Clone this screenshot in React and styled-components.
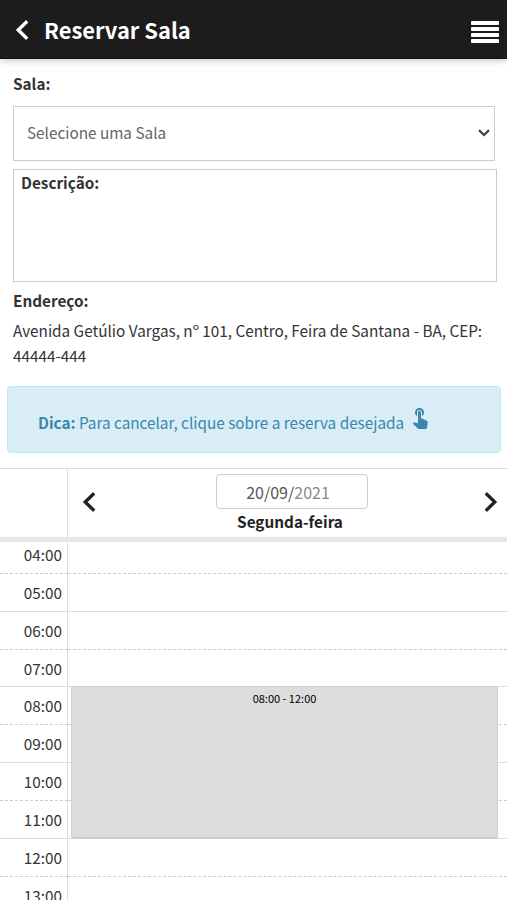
import React, { Component } from 'react';
import styled, { createGlobalStyle, css } from 'styled-components';
import { MdTouchApp } from 'react-icons/md';

const Global = {
    color: {
        body: '#333',
        bar: '#1c1c1c',
        line: '#ddd',
        info: '#3a87ad',
    },
    size: {
        body: '15.3px',
        label: '15.3px',
    },
    font: '"Noto Sans CJK SC", "Noto Sans CJK JP", "Noto Sans", sans-serif',
};

const ROW_HEIGHT = 37.87;

const GlobalStyle = createGlobalStyle`
    * {
        box-sizing: border-box;
    }
    body {
        margin: 0;
        background: #fff;
        color: ${Global.color.body};
        font-family: ${Global.font};
        font-size: ${Global.size.body};
        line-height: 25px;
    }
    button, input, select {
        font-family: inherit;
    }
`;

const Page = styled.div`
    display: flex;
    flex-direction: column;
    height: 900px;
    overflow: hidden;
`;

const Header = styled.header`
    display: flex;
    align-items: center;
    flex: 0 0 59px;
    height: 59px;
    padding: 3px 8px 0 15px;
    background: ${Global.color.bar};
    border-bottom: 1px solid #111;
    box-shadow: 0 1px 8px rgba(0, 0, 0, 0.25);
`;

const Title = styled.h1`
    flex: 1;
    margin: -2px 0 0 15px;
    color: #fff;
    font-size: 21.9px;
    font-weight: 700;
    line-height: 30px;
`;

const IconButton = styled.button`
    display: flex;
    align-items: center;
    padding: 0;
    border: 0;
    background: none;
    color: ${props => props.$color || '#222'};
`;

const BackButton = styled(IconButton)`
    margin-top: -2px;
`;

const MenuButton = styled(IconButton)`
    margin-top: 2px;
`;

const Form = styled.section`
    display: flex;
    flex-direction: column;
    padding: 12px 10px 0 13px;
`;

const Label = styled.div`
    font-size: ${Global.size.label};
    font-weight: 700;
    line-height: 24px;
`;

const Select = styled.div`
    display: flex;
    align-items: center;
    justify-content: space-between;
    width: 482px;
    height: 55px;
    margin: 11px 0 8px;
    padding: 0 4px 2px 13px;
    border: 1px solid #ccc;
    color: #666;
`;

const Description = styled.div`
    height: 113px;
    padding: 0 7px;
    border: 1px solid #ccc;
    margin-bottom: 6px;
`;

const Address = styled.p`
    margin: 6px 0 0;
    line-height: 25px;
`;

const Tip = styled.div`
    display: flex;
    align-items: center;
    flex: 0 0 67px;
    margin: 18px 6px 15px 7px;
    padding: 6px 30px 0;
    border: 1px solid #bce8f1;
    border-radius: 4px;
    background: #d9edf7;
    color: ${Global.color.info};
    white-space: pre;

    svg {
        margin: 0 0 12px 4px;
    }
`;

const DayHeader = styled.div`
    display: grid;
    grid-template-columns: 68px 1fr;
    flex: 0 0 74px;
    border-top: 1px solid ${Global.color.line};
    border-bottom: 5px solid #e7e7e7;
`;

const Corner = styled.div`
    border-right: 1px solid ${Global.color.line};
`;

const DayNav = styled.div`
    display: flex;
    justify-content: space-between;
    padding: 0 9px 2px 14px;
`;

const Day = styled.div`
    display: flex;
    flex-direction: column;
    align-items: center;
    padding: 5px 0 0 3px;
`;

const DateField = styled.div`
    width: 152px;
    height: 35px;
    border: 1px solid #ccc;
    border-radius: 4px;
    color: #555;
    font-size: 16px;
    line-height: 34px;
    padding-right: 7px;
    text-align: center;

    span {
        color: #888;
    }
`;

const DayName = styled(Label)`
    margin-right: 3px;
    color: #222;
`;

const Schedule = styled.div`
    flex: 1;
    overflow: hidden;
`;

const Grid = styled.div`
    display: grid;
    grid-template-columns: 68px 1fr;
    grid-auto-rows: ${ROW_HEIGHT}px;
    margin-top: -6px;
`;

const Hour = styled.div`
    grid-column: 1;
    grid-row: ${props => props.$row};
    padding-right: 5px;
    border-right: 1px solid ${Global.color.line};
    border-bottom: 1px solid ${Global.color.line};
    line-height: 36px;
    text-align: right;

    ${props => props.$dashed && css`
        border-bottom: 1px dashed #ccc;
    `}
`;

const Slot = styled(Hour)`
    grid-column: 2;
    border-right: 0;
`;

const Booking = styled.div`
    grid-column: 2;
    grid-row: ${props => props.$from} / span ${props => props.$hours};
    z-index: 1;
    margin: -1px 9px 0 3px;
    padding-top: 3px;
    border: 1px solid #d0d0d0;
    border-bottom: 2px solid #ccc;
    border-radius: 3px;
    background: #ddd;
    color: #000;
    font-size: 11px;
    line-height: 17px;
    text-align: center;
`;

const HOURS = ['04:00', '05:00', '06:00', '07:00', '08:00', '09:00', '10:00', '11:00', '12:00', '13:00'];

const Chevron = ({ right }) => (
    <svg width="14" height="20" viewBox="0 0 14 20" fill="none" stroke="currentColor" strokeWidth="3.3">
        <path d={right ? 'M1.8 1.2 L10.8 10 L1.8 18.8' : 'M12.2 1.2 L3.2 10 L12.2 18.8'} />
    </svg>
);

const MenuIcon = () => (
    <svg width="28" height="22" viewBox="0 0 28 22" fill="currentColor">
        {[0, 6, 12, 18].map(y => <rect key={y} y={y} width="28" height="4" rx="0.8" />)}
    </svg>
);

class App extends Component {
    render() {
        return (
            <Page>
                <GlobalStyle />
                <Header>
                    <BackButton $color="#fff" aria-label="Voltar"><Chevron /></BackButton>
                    <Title>Reservar Sala</Title>
                    <MenuButton $color="#fff" aria-label="Menu"><MenuIcon /></MenuButton>
                </Header>
                <Form>
                    <Label>Sala:</Label>
                    <Select>
                        Selecione uma Sala
                        <svg width="12" height="8" viewBox="0 0 12 8" fill="none" stroke="#444" strokeWidth="2.3">
                            <path d="M1 1.2 L6 6 L11 1.2" />
                        </svg>
                    </Select>
                    <Description><Label>Descrição:</Label></Description>
                    <Label>Endereço:</Label>
                    <Address>Avenida Getúlio Vargas, nº 101, Centro, Feira de Santana - BA, CEP: 44444-444</Address>
                </Form>
                <Tip>
                    <b>Dica:</b> Para cancelar, clique sobre a reserva desejada
                    <MdTouchApp size={24} />
                </Tip>
                <DayHeader>
                    <Corner />
                    <DayNav>
                        <IconButton aria-label="Dia anterior"><Chevron /></IconButton>
                        <Day>
                            <DateField>20/09/<span>2021</span></DateField>
                            <DayName>Segunda-feira</DayName>
                        </Day>
                        <IconButton aria-label="Próximo dia"><Chevron right /></IconButton>
                    </DayNav>
                </DayHeader>
                <Schedule>
                    <Grid>
                        {HOURS.map((hour, i) => (
                            <React.Fragment key={hour}>
                                <Hour $row={i + 1} $dashed={i % 2 === 0}>{hour}</Hour>
                                <Slot $row={i + 1} $dashed={i % 2 === 0} />
                            </React.Fragment>
                        ))}
                        <Booking $from={5} $hours={4}>08:00 - 12:00</Booking>
                    </Grid>
                </Schedule>
            </Page>
        );
    }
}

export default App;
